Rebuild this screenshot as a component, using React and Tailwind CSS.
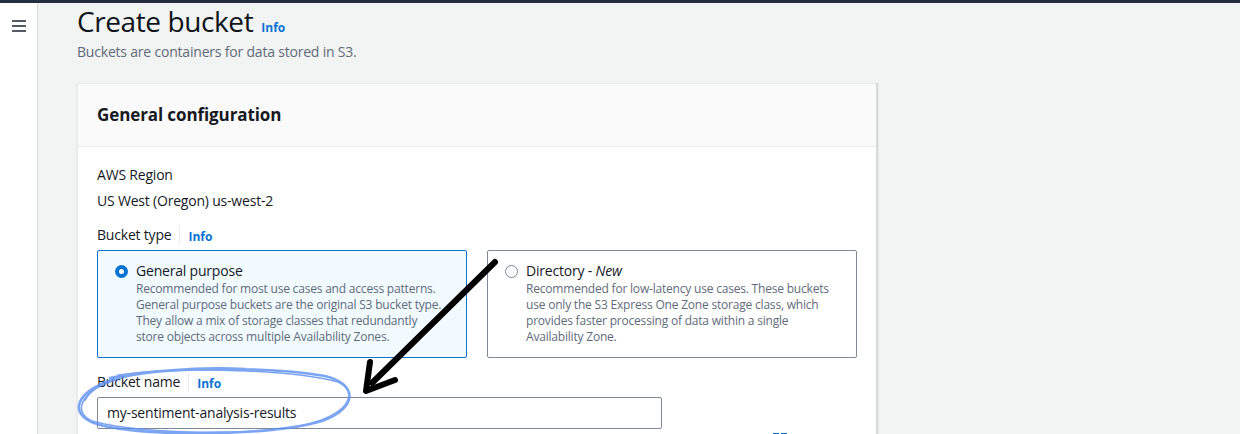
import React from "react";

function Info() {
  return <span className="text-[12px] font-bold text-[#0972d3] tracking-[0px]">Info</span>;
}

export default function App() {
  return (
    <div className="relative w-[1240px] h-[434px] overflow-hidden bg-[#f2f3f3] text-[#16191f] tracking-[-0.2px]" style={{ fontFamily: '"Open Sans", "Noto Sans", sans-serif' }}>
      <div className="h-[3px] bg-[#232f3e]" />
      <div className="flex h-[431px]">
        <aside className="w-[38px] shrink-0 bg-white border-r border-[#d5dbdb] flex justify-center pt-[15px]">
          <div className="flex flex-col gap-[3px] pt-[2px]">
            <span className="block w-[14px] h-[2px] bg-[#545b64]" />
            <span className="block w-[14px] h-[2px] bg-[#545b64]" />
            <span className="block w-[14px] h-[2px] bg-[#545b64]" />
          </div>
        </aside>
        <main className="flex-1 pl-[39px]">
          <div className="flex items-baseline gap-[8px] h-[36px]">
            <h1 className="text-[28px] leading-[36px] font-normal tracking-[-0.4px] text-[#0f141a]">Create bucket</h1>
            <Info />
          </div>
          <p className="text-[14px] leading-[20px] text-[#5f6b7a] mt-[3px]">Buckets are containers for data stored in S3.</p>
          <section className="mt-[21px] w-[801px] bg-white border-l border-[#e9ebed] border-r-2 border-r-[#d5dbdb] shadow-[0_1px_1px_rgba(0,28,36,0.2)]">
            <div className="h-[64px] bg-[#fafafa] border-b border-[#e9ebed] border-t border-t-[#eaeded] flex items-center px-[19px]">
              <h2 className="text-[17px] font-bold leading-[22px] tracking-[-0.1px]">General configuration</h2>
            </div>
            <div className="px-[19px] pt-[18px] text-[14px]">
              <div className="leading-[20px]">AWS Region</div>
              <div className="leading-[20px] mt-[6px]">US West (Oregon) us-west-2</div>
              <div className="flex items-center mt-[14px] h-[20px]">
                <span className="leading-[20px] pr-[8px] border-r border-[#e9ebed]">Bucket type</span>
                <span className="pl-[8px]"><Info /></span>
              </div>
              <div className="grid grid-cols-2 gap-[20px] w-[760px] mt-[5px]">
                <div className="h-[108px] rounded-[2px] border border-[#0972d3] bg-[#f1faff] px-[17px] pt-[10px] flex gap-[8px]">
                  <span className="mt-[4px] w-[13px] h-[13px] rounded-full border-[4px] border-[#0972d3] bg-white shrink-0" />
                  <div>
                    <div className="leading-[20px]">General purpose</div>
                    <p className="text-[12px] leading-[16px] text-[#5f6b7a] max-w-[308px]">Recommended for most use cases and access patterns. General purpose buckets are the original S3 bucket type. They allow a mix of storage classes that redundantly store objects across multiple Availability Zones.</p>
                  </div>
                </div>
                <div className="h-[108px] rounded-[2px] border border-[#7d8998] bg-white px-[17px] pt-[10px] flex gap-[8px]">
                  <span className="mt-[4px] w-[13px] h-[13px] rounded-full border border-[#7d8998] bg-white shrink-0" />
                  <div>
                    <div className="leading-[20px]">Directory - <em>New</em></div>
                    <p className="text-[12px] leading-[16px] text-[#5f6b7a]">Recommended for low-latency use cases. These buckets use only the S3 Express One Zone storage class, which provides faster processing of data within a single Availability Zone.</p>
                  </div>
                </div>
              </div>
              <div className="flex items-center mt-[14px] h-[20px]">
                <span className="leading-[20px] pr-[8px] border-r border-[#e9ebed]">Bucket name</span>
                <span className="pl-[8px]"><Info /></span>
              </div>
              <div className="mt-[5px] w-[565px] h-[32px] rounded-[2px] border border-[#7d8998] flex items-center px-[9px] leading-[20px]">
                my-sentiment-analysis-results
              </div>
              <div className="ml-[676px] mt-[4px] flex gap-[2px]">
                <span className="block w-[6px] h-[2px] bg-[#0972d3]" />
                <span className="block w-[6px] h-[2px] bg-[#0972d3]" />
              </div>
            </div>
          </section>
        </main>
      </div>
      <svg className="absolute inset-0 pointer-events-none" width="1240" height="434" viewBox="0 0 1240 434">
        <g fill="none" stroke="#5b8ff0" strokeLinecap="round" opacity="0.8">
          <path d="M110 378 C 160 367, 270 366, 325 376 C 358 384, 358 408, 322 421 C 270 436, 150 437, 100 425 C 70 417, 72 396, 106 382 C 140 370, 200 367, 245 369" strokeWidth="2.6" />
          <path d="M118 375 C 190 366, 292 370, 338 382 C 360 392, 350 415, 300 426 C 240 436, 140 434, 92 421 C 72 412, 80 392, 118 377" strokeWidth="1.6" />
          <path d="M85 400 C 90 390, 100 385, 115 380" strokeWidth="2" />
        </g>
        <g stroke="#000" strokeWidth="6" strokeLinecap="round" fill="none">
          <line x1="495" y1="262" x2="372" y2="383" />
          <polyline points="370,362 366,391 395,380" strokeLinejoin="round" />
        </g>
      </svg>
    </div>
  );
}
